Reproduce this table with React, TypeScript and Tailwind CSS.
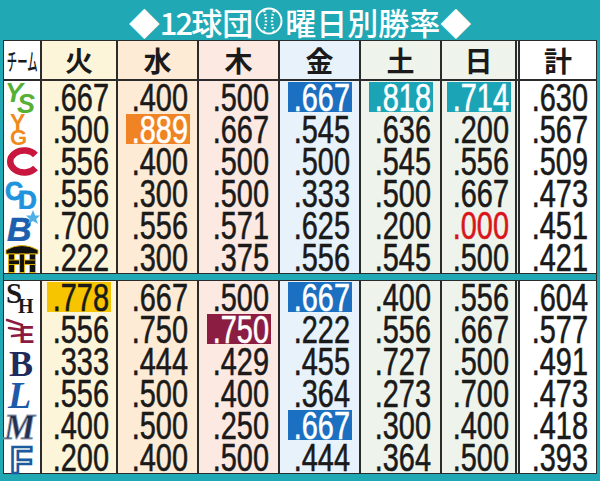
import React from "react";

// y: 0-40 title, table 40-474, teal bottom
const teams: { logo: string; vals: string[] }[][] = [
  [
    { logo: "ys", vals: [".667", ".400", ".500", ".667:b", ".818:t", ".714:t", ".630"] },
    { logo: "g", vals: [".500", ".889:o", ".667", ".545", ".636", ".200", ".567"] },
    { logo: "c", vals: [".556", ".400", ".500", ".500", ".545", ".556", ".509"] },
    { logo: "d", vals: [".556", ".300", ".500", ".333", ".500", ".667", ".473"] },
    { logo: "db", vals: [".700", ".556", ".571", ".625", ".200", ".000:r", ".451"] },
    { logo: "t", vals: [".222", ".300", ".375", ".556", ".545", ".500", ".421"] },
  ],
  [
    { logo: "h", vals: [".778:y", ".667", ".500", ".667:b", ".400", ".556", ".604"] },
    { logo: "e", vals: [".556", ".750", ".750:m", ".222", ".556", ".667", ".577"] },
    { logo: "bu", vals: [".333", ".444", ".429", ".455", ".727", ".500", ".491"] },
    { logo: "l", vals: [".556", ".500", ".400", ".364", ".273", ".700", ".473"] },
    { logo: "m", vals: [".400", ".500", ".250", ".667:b", ".300", ".400", ".418"] },
    { logo: "f", vals: [".200", ".400", ".500", ".444", ".364", ".500", ".393"] },
  ],
];

const days = ["火", "水", "木", "金", "土", "日", "計"];

const colCls = [
  "w-[76px] bg-[#fdf5da] border-r-2 border-[#2b2b2b]",
  "w-[81px] bg-[#fdebd5] border-r-2 border-[#2b2b2b]",
  "w-[81px] bg-[#fce9e2] border-r-2 border-[#2b2b2b]",
  "w-[81px] bg-[#e7f2fa] border-r-2 border-[#2b2b2b]",
  "w-[81px] bg-[#eef4ec] border-r-2 border-[#2b2b2b]",
  "w-[78px] bg-[#eef4ec] border-r-[5px] border-double border-[#2b2b2b]",
  "w-[76px] bg-white",
];

const hlCls: Record<string, string> = {
  b: "bg-[#1b70c1] text-white",
  t: "bg-[#1ba4b6] text-white",
  o: "bg-[#f08323] text-white",
  y: "bg-[#f7c500] text-[#1a1a1a]",
  m: "bg-[#8b1d42] text-white",
  r: "text-[#d9141b]",
};

const serif = "Liberation Serif, serif";
const sans = "Liberation Sans, sans-serif";

const Logo = ({ id }: { id: string }) => (
  <svg width="34" height="31" viewBox="0 0 34 31" overflow="visible">
    {id === "ys" && (
      <text fill="#55b033" fontFamily={sans} fontWeight="900" fontStyle="italic">
        <tspan x="0" y="20" fontSize="27">Y</tspan>
        <tspan x="12" y="31" fontSize="27">S</tspan>
      </text>
    )}
    {id === "g" && (
      <text fill="#f08a1d" fontFamily={sans} fontWeight="900">
        <tspan x="5" y="17" fontSize="23">Y</tspan>
        <tspan x="5" y="31" fontSize="22">G</tspan>
      </text>
    )}
    {id === "c" && (
      <path d="M30.5 9 A14 11 0 1 0 30.5 22" stroke="#c8163f" strokeWidth="6.5" fill="none" />
    )}
    {id === "d" && (
      <text fill="#1f93dc" stroke="#1f93dc" strokeWidth="0.8" fontFamily={sans} fontWeight="900">
        <tspan x="0" y="22" fontSize="25">C</tspan>
        <tspan x="13" y="31" fontSize="26">D</tspan>
      </text>
    )}
    {id === "db" && (
      <g>
        <text x="2" y="31" fontSize="34" fontFamily={sans} fontWeight="900" fontStyle="italic" fill="#1b5fae" stroke="#1b5fae" strokeWidth="0.6">B</text>
        <polygon points="28,0 30.2,5.5 35,5.5 31.2,9 33,14 28,11 23,14 24.8,9 21,5.5 25.8,5.5" fill="#4fb0e6" />
      </g>
    )}
    {id === "t" && (
      <g fill="#111" stroke="#e9b800" strokeWidth="0.9">
        <path d="M1 8 Q17 -1 33 8 L33 12 L1 12 Z" />
        <rect x="3.5" y="12" width="6" height="18.5" />
        <rect x="24.5" y="12" width="6" height="18.5" />
        <rect x="3.5" y="18" width="27" height="4.5" />
        <rect x="14.6" y="12" width="4.8" height="18.5" />
      </g>
    )}
    {id === "h" && (
      <text fill="#1a1a1a" fontFamily={serif} fontWeight="700">
        <tspan x="1" y="21" fontSize="29">S</tspan>
        <tspan x="13" y="31" fontSize="20">H</tspan>
      </text>
    )}
    {id === "e" && (
      <g>
        <g stroke="#8c1b3f" strokeWidth="2.6" strokeLinecap="round">
          <line x1="2" y1="6" x2="17" y2="11" />
          <line x1="4" y1="14" x2="17" y2="16" />
          <line x1="7" y1="22" x2="17" y2="21" />
        </g>
        <text x="14" y="29" fontSize="23" fontFamily={sans} fontWeight="900" fill="#8c1b3f">E</text>
      </g>
    )}
    {id === "bu" && (
      <text x="4" y="30" fontSize="36" fontFamily={serif} fontWeight="700" fill="#1f2b5c">B</text>
    )}
    {id === "l" && (
      <text x="3" y="30" fontSize="38" fontFamily={serif} fontWeight="700" fontStyle="italic" fill="#1d5aa9">L</text>
    )}
    {id === "m" && (
      <text x="-1" y="29" fontSize="35" fontFamily={serif} fontWeight="700" fontStyle="italic" fill="#223052" stroke="#9aa4b4" strokeWidth="0.8">M</text>
    )}
    {id === "f" && (
      <text x="5" y="31" fontSize="37" fontFamily={sans} fontWeight="700" fill="#ffffff" stroke="#1c5a9e" strokeWidth="2.6">F</text>
    )}
  </svg>
);

const Ball = () => (
  <svg width="30" height="30" viewBox="0 0 30 30" className="mx-px">
    <circle cx="15" cy="15" r="12.5" stroke="white" strokeWidth="2" fill="none" />
    <path d="M10 4.5 Q14 15 10 25.5" stroke="white" strokeWidth="2.4" strokeDasharray="1.6 1.8" fill="none" />
    <path d="M20 4.5 Q16 15 20 25.5" stroke="white" strokeWidth="2.4" strokeDasharray="1.6 1.8" fill="none" />
  </svg>
);

const Cell = ({ v, i }: { v: string; i: number }) => {
  const [num, hl] = v.split(":");
  return (
    <div className={`${colCls[i]} h-full flex items-center justify-center`}>
      <span
        className={`w-[64px] h-[30px] flex items-center justify-end pr-[2px] ${hl ? hlCls[hl] : "text-[#1a1a1a]"}`}
      >
        <span className="inline-block shrink-0 origin-right scale-x-[0.76] translate-y-[1px] text-[38px] leading-[28px] [-webkit-text-stroke:0.6px_currentColor] font-['Liberation_Sans',sans-serif]">
          {num}
        </span>
      </span>
    </div>
  );
};

export default function App() {
  return (
    <div className="w-[600px] h-[481px] bg-[#21a8b5] overflow-hidden">
      {/* Title */}
      <div className="h-[40px] flex items-center justify-center pt-[2px] text-white text-[31px] leading-none font-medium font-['Noto_Sans_CJK_JP',sans-serif]">
        <span>◆</span>
        <span className="tracking-[-2px]">12</span>
        <span>球団</span>
        <Ball />
        <span>曜日別勝率◆</span>
      </div>

      <div className="mx-[3px] border border-[#2b2b2b] bg-white">
        {/* Header */}
        <div className="h-[40px] flex border-b-2 border-[#2b2b2b]">
          <div className="w-[38px] h-full border-r-2 border-[#2b2b2b] bg-white flex items-center justify-center overflow-hidden">
            <span className="text-[23px] leading-none scale-x-[0.45] whitespace-nowrap text-[#1a1a1a] font-medium font-['Noto_Sans_CJK_JP',sans-serif]">
              チーム
            </span>
          </div>
          {days.map((d, i) => (
            <div
              key={d}
              className={`${colCls[i]} h-full flex items-center justify-center text-[28px] leading-none font-bold text-[#1a1a1a] font-['Noto_Sans_CJK_JP',sans-serif]`}
            >
              {d}
            </div>
          ))}
        </div>

        {teams.map((group, gi) => (
          <div key={gi}>
            {gi === 1 && <div className="h-[8px] bg-[#21a8b5] border-y border-[#2b2b2b]" />}
            {group.map((t) => (
              <div key={t.logo} className="h-[32px] flex">
                <div className="w-[38px] h-full border-r-2 border-[#2b2b2b] bg-white flex items-center justify-center">
                  <Logo id={t.logo} />
                </div>
                {t.vals.map((v, i) => (
                  <Cell key={i} v={v} i={i} />
                ))}
              </div>
            ))}
          </div>
        ))}
      </div>
    </div>
  );
}
